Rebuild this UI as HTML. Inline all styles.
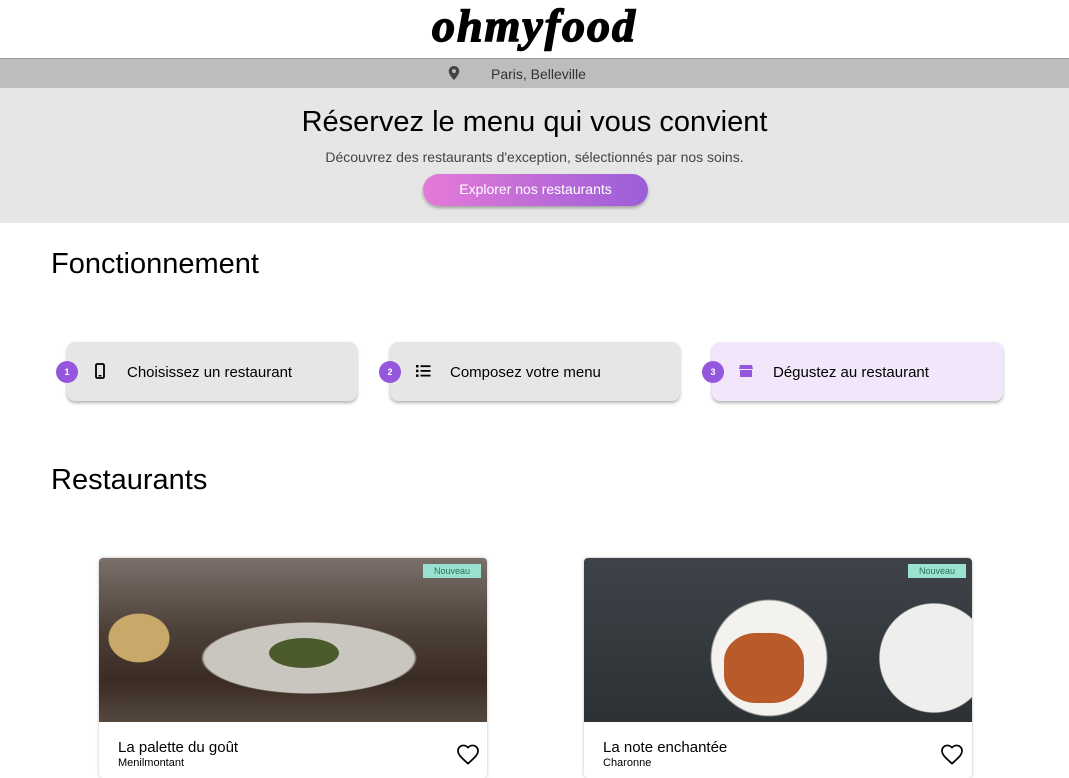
<!DOCTYPE html>
<html><head><meta charset="utf-8"><style>
*{margin:0;padding:0;box-sizing:border-box}
body{width:1069px;height:769px;overflow:hidden;background:#fff;font-family:"Liberation Sans",sans-serif;color:#000;position:relative}
.abs{position:absolute}
.logo{left:0;width:1069px;top:0px;text-align:center;font-family:"Liberation Serif",serif;font-weight:bold;font-style:italic;font-size:46px;letter-spacing:2px;line-height:52px;-webkit-text-stroke:1.5px #000}
.loc{left:0;top:58px;width:1069px;height:30px;background:#bdbdbd;border-top:1px solid #999}
.hero{left:0;top:88px;width:1069px;height:135px;background:#e6e6e6}
.step{top:342px;height:59px;border-radius:8px;background:#e6e6e6;box-shadow:0 2px 3px rgba(0,0,0,.3)}
.num{width:22px;height:22px;border-radius:50%;background:#9356dc;color:#fff;font-size:9px;font-weight:bold;text-align:center;line-height:22px;top:361px}
.st{top:363px;font-size:15px}
.card{top:558px;width:388px;height:220px;border-radius:4px;box-shadow:0 0 3px rgba(0,0,0,.25);overflow:hidden;background:#fff}
.img{height:164px}
.badge{top:6px;right:6px;background:#99e2cf;color:#2b6f5c;font-size:9px;padding:2px 11px}
</style></head><body>
<div class="abs logo">ohmyfood</div>
<div class="abs loc">
 <svg class="abs" style="left:448px;top:7px" width="12" height="14" viewBox="0 0 12 16"><path d="M6 0C2.7 0 0 2.6 0 5.8 0 10 6 16 6 16s6-6 6-10.2C12 2.6 9.3 0 6 0zm0 8a2.2 2.2 0 110-4.4A2.2 2.2 0 016 8z" fill="#444"/></svg>
 <div class="abs" style="left:491px;top:7px;font-size:14px;color:#333">Paris, Belleville</div>
</div>
<div class="abs hero">
 <div class="abs" style="left:0;width:1069px;top:18px;text-align:center;font-size:29px">Réservez le menu qui vous convient</div>
 <div class="abs" style="left:0;width:1069px;top:61px;text-align:center;font-size:14px;color:#444">Découvrez des restaurants d'exception, sélectionnés par nos soins.</div>
 <div class="abs" style="left:423px;top:86px;width:225px;height:32px;border-radius:16px;background:linear-gradient(90deg,#e57ad8,#9b5ed8);color:#fff;font-size:14px;text-align:center;line-height:31px;box-shadow:0 2px 3px rgba(0,0,0,.3)">Explorer nos restaurants</div>
</div>
<div class="abs" style="left:51px;top:248px;font-size:29px">Fonctionnement</div>
<div class="abs step" style="left:67px;width:290px"></div>
<div class="abs step" style="left:390px;width:290px"></div>
<div class="abs step" style="left:712px;width:291px;background:#f2e6fa"></div>
<div class="abs num" style="left:56px">1</div>
<div class="abs num" style="left:379px">2</div>
<div class="abs num" style="left:702px">3</div>
<svg class="abs" style="left:95px;top:363px" width="10" height="16" viewBox="0 0 10 16"><rect x="1" y="1" width="8" height="14" rx="1.2" fill="none" stroke="#000" stroke-width="1.8"/><rect x="3.5" y="12" width="3" height="1.5" fill="#000"/></svg>
<svg class="abs" style="left:416px;top:365px" width="15" height="12" viewBox="0 0 15 12"><g fill="#000"><rect x="0" y="0" width="2.5" height="2.5"/><rect x="0" y="4.7" width="2.5" height="2.5"/><rect x="0" y="9.4" width="2.5" height="2.5"/><rect x="4.5" y="0.3" width="10" height="1.8"/><rect x="4.5" y="5" width="10" height="1.8"/><rect x="4.5" y="9.7" width="10" height="1.8"/></g></svg>
<svg class="abs" style="left:739px;top:365px" width="14" height="12" viewBox="0 0 14 12"><path d="M1 0h12l1 4H0z M1 5h12v7H1z" fill="#9356dc"/></svg>
<div class="abs st" style="left:127px;top:364px">Choisissez un restaurant</div>
<div class="abs st" style="left:450px;top:364px">Composez votre menu</div>
<div class="abs st" style="left:773px;top:364px">Dégustez au restaurant</div>
<div class="abs" style="left:51px;top:464px;font-size:29px">Restaurants</div>
<div class="abs card" style="left:99px">
 <div class="img" style="background:radial-gradient(ellipse 150px 50px at 210px 100px,#c9c6c0 70%,transparent 72%),radial-gradient(ellipse 50px 40px at 40px 80px,#c9a96a 60%,transparent 62%),linear-gradient(180deg,#7a706a 0%,#4c3f36 45%,#3a2c22 75%,#55483f 100%)"></div>
 <div class="abs" style="left:170px;top:80px;width:70px;height:30px;border-radius:50%;background:#4a5a2a"></div>
 <div class="abs badge">Nouveau</div>
 <div class="abs" style="left:19px;top:181px;font-size:15px">La palette du goût</div>
 <div class="abs" style="left:19px;top:199px;font-size:11px">Menilmontant</div>
 <svg class="abs" style="left:357px;top:186px" width="24" height="21" viewBox="0 0 24 22"><path d="M12 20.5l-1.5-1.3C5 14.3 1.5 11.1 1.5 7.1 1.5 3.9 4 1.5 7.1 1.5c1.8 0 3.6.8 4.9 2.2 1.3-1.4 3.1-2.2 4.9-2.2 3.1 0 5.6 2.4 5.6 5.6 0 4-3.5 7.2-9 12.1z" fill="none" stroke="#000" stroke-width="1.8"/></svg>
</div>
<div class="abs card" style="left:584px">
 <div class="img" style="background:radial-gradient(circle 95px at 185px 100px,#f4f2ee 60%,transparent 62%),radial-gradient(circle 60px at 350px 100px,#eeeeec 90%,transparent 92%),linear-gradient(180deg,#3d4348,#2c3135)"></div>
 <div class="abs" style="left:140px;top:75px;width:80px;height:70px;border-radius:40%;background:#b85a2a"></div>
 <div class="abs badge">Nouveau</div>
 <div class="abs" style="left:19px;top:181px;font-size:15px">La note enchantée</div>
 <div class="abs" style="left:19px;top:199px;font-size:11px">Charonne</div>
 <svg class="abs" style="left:356px;top:186px" width="24" height="21" viewBox="0 0 24 22"><path d="M12 20.5l-1.5-1.3C5 14.3 1.5 11.1 1.5 7.1 1.5 3.9 4 1.5 7.1 1.5c1.8 0 3.6.8 4.9 2.2 1.3-1.4 3.1-2.2 4.9-2.2 3.1 0 5.6 2.4 5.6 5.6 0 4-3.5 7.2-9 12.1z" fill="none" stroke="#000" stroke-width="1.8"/></svg>
</div>
</body></html>
